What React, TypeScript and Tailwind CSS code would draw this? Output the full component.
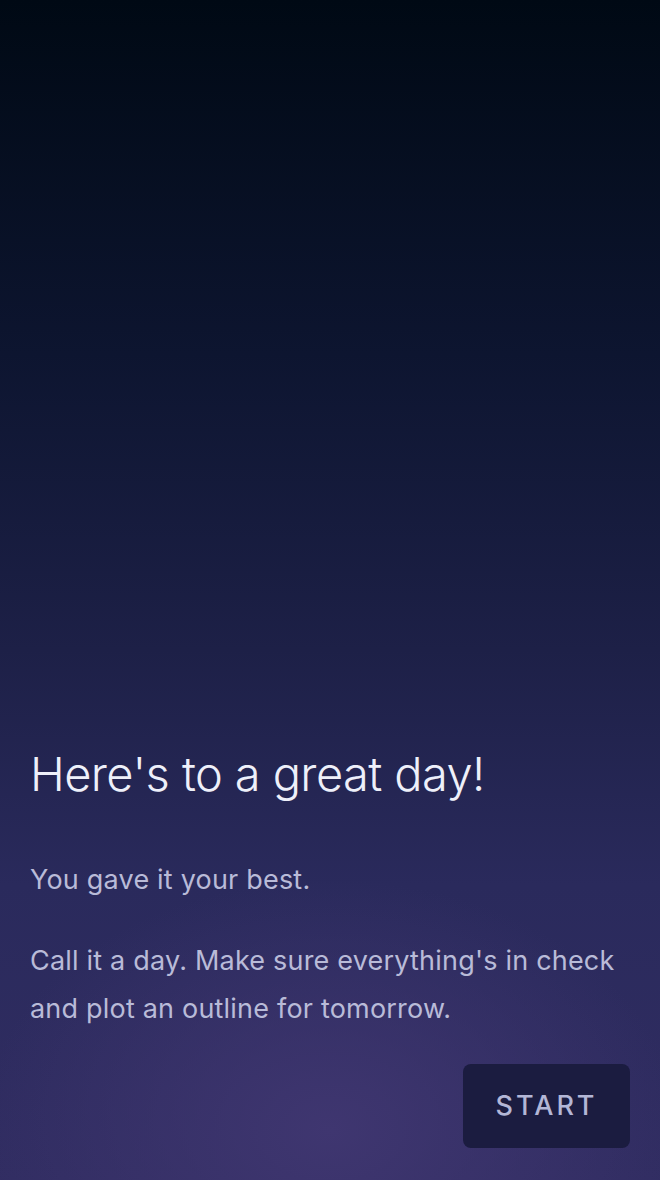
export default function App() {
  return (
    <div
      className="relative flex h-[1180px] w-full flex-col justify-end overflow-hidden bg-[linear-gradient(180deg,#000914_0%,#0d1530_30%,#1d2047_55%,#2a2a5c_75%,#312d62_100%)] font-['Inter',sans-serif]"
    >
      {/* glow at the bottom */}
      <div className="pointer-events-none absolute bottom-[-200px] left-1/2 h-[500px] w-[700px] -translate-x-1/2 rounded-full bg-[radial-gradient(closest-side,#3f3670_0%,rgba(63,54,112,0)_100%)]" />

      <div className="relative px-[30px] pb-[32px]">
        <h1 className="text-[47px] font-light leading-none tracking-[-0.6px] text-[#eef0fa]">
          Here's to a great day!
        </h1>
        <p className="mt-[59px] text-[27px] leading-[48px] tracking-[0.2px] text-[#b9bbd8]">You gave it your best.</p>
        <p className="mt-[33px] text-[27px] leading-[48px] tracking-[0.2px] text-[#b9bbd8]">
          Call it a day. Make sure everything's in check and plot an outline for tomorrow.
        </p>
        <div className="mt-[31px] flex justify-end">
          <button className="h-[84px] w-[167px] rounded-[8px] bg-[#1b1c40] text-[27px] font-medium tracking-[3px] text-[#b3b6d6]">
            START
          </button>
        </div>
      </div>
    </div>
  );
}
